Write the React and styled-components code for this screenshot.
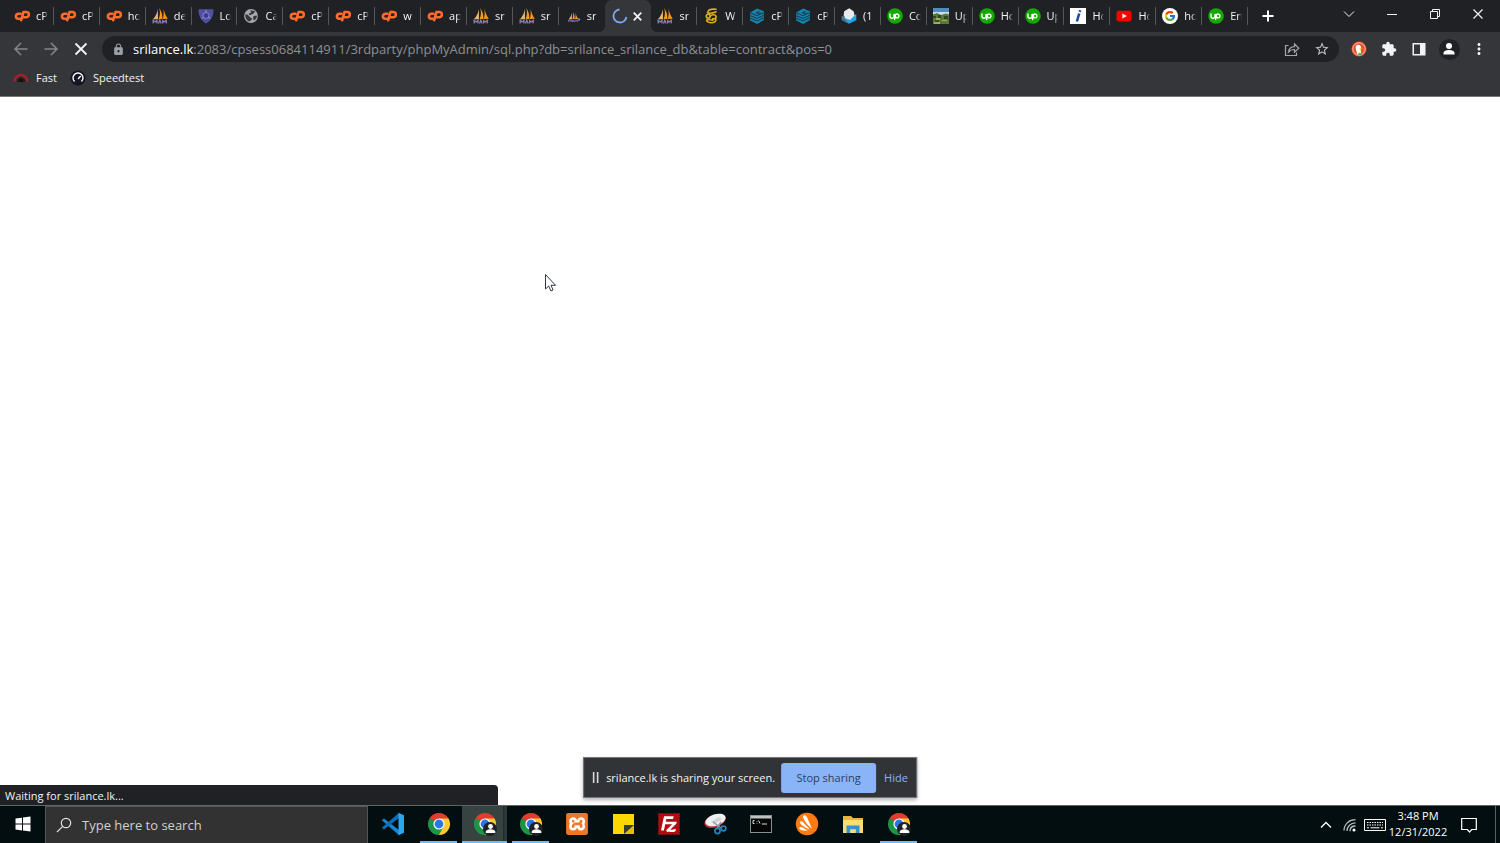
import React from "react";
import styled, { createGlobalStyle, css } from "styled-components";
import { MdExtension, MdLock, MdMoreVert, MdStarBorder } from "react-icons/md";
import { FcGoogle } from "react-icons/fc";
import { SiXampp, SiFilezilla } from "react-icons/si";

const Global = createGlobalStyle`
  *, *::before, *::after { box-sizing: border-box; }
  body {
    margin: 0;
    background: #fff;
    font-family: "Open Sans", "Noto Sans", sans-serif;
    font-size: 11px;
    line-height: 16px;
  }
  button, input { font: inherit; color: inherit; background: none; border: 0; padding: 0; margin: 0; outline: none; }
  svg { display: block; flex: none; }
`;

const Screen = styled.div`
  display: flex;
  flex-direction: column;
  min-height: 100vh;
  overflow: hidden;
`;

/* ---------- browser chrome ---------- */

const TitleBar = styled.header`
  display: flex;
  height: 32px;
  padding-left: 8px;
  background: #202124;
  color: #f1f3f4;
`;

const TabStrip = styled.nav`
  display: flex;
  flex: 1 1 0;
  min-width: 0;
  max-width: 1240px;
`;

const Tab = styled.button`
  position: relative;
  display: flex;
  flex: 1 1 0;
  min-width: 0;
  align-items: center;
  gap: 6px;
  padding: 0 6px;
  height: 32px;

  ${({ $divided }) => $divided && css`
    &::after {
      content: "";
      position: absolute;
      right: 0;
      top: 7px;
      width: 1px;
      height: 18px;
      background: #55575b;
    }
  `}

  ${({ $active }) => $active && css`
    gap: 4px;
    padding-left: 7px;
    background: #35363a;
    border-radius: 7px 7px 0 0;
    &::before, &::after {
      content: "";
      position: absolute;
      bottom: 0;
      width: 6px;
      height: 6px;
    }
    &::before { left: -6px; background: radial-gradient(circle at 0 0, #202124 6px, #35363a 6px); }
    &::after { right: -6px; background: radial-gradient(circle at 100% 0, #202124 6px, #35363a 6px); }
  `}
`;

const TabTitle = styled.span`
  flex: 1;
  min-width: 0;
  overflow: hidden;
  white-space: nowrap;
  text-align: left;
  mask-image: linear-gradient(to right, #000 65%, transparent 100%);
`;

const NewTab = styled.button`
  display: grid;
  place-items: center;
  width: 40px;
  height: 32px;
`;

const WindowControls = styled.div`
  display: flex;
  margin-left: auto;
  padding-right: 1px;
`;

const WindowButton = styled.button`
  display: grid;
  place-items: center;
  width: 43px;
  height: 27px;
`;

const Toolbar = styled.div`
  display: flex;
  align-items: center;
  height: 34px;
  padding: 0 6px;
  background: #35363a;
  color: #f1f3f4;
`;

const ToolButton = styled.button`
  display: grid;
  place-items: center;
  width: 30px;
  height: 28px;
  color: ${({ $dim }) => ($dim ? "#85878a" : "#f1f3f4")};
`;

const AddressBar = styled.form`
  display: flex;
  flex: 1;
  align-items: center;
  height: 26px;
  margin: 0 5px 0 6px;
  padding: 0 2px 0 10px;
  border-radius: 13px;
  background: #202124;
  color: #9aa0a6;
  font-size: 13px;
`;

const Host = styled.label`
  margin-left: 8px;
  color: #fff;
`;

const Path = styled.input`
  flex: 1;
  min-width: 0;
  height: 20px;
  color: #8d9094;
`;

const Avatar = styled.span`
  display: grid;
  place-items: center;
  width: 21px;
  height: 21px;
  border-radius: 50%;
  background: #202124;
`;

const Bookmarks = styled.nav`
  display: flex;
  gap: 13px;
  height: 31px;
  padding: 4px 13px 0;
  border-bottom: 1px solid #77797c;
  background: #35363a;
`;

const Bookmark = styled.a`
  display: flex;
  align-items: center;
  gap: 7px;
  height: 16px;
  color: #f1f3f4;
  text-decoration: none;
`;

/* ---------- page and overlays ---------- */

const Page = styled.main`
  position: relative;
  flex: 1;
  background: #fff;
`;

const Pointer = styled.span`
  position: absolute;
  left: 544px;
  top: 176px;
`;

const StatusBubble = styled.div`
  position: absolute;
  left: 0;
  bottom: 0;
  width: 498px;
  height: 20px;
  padding: 3px 5px 0;
  border-radius: 0 4px 0 0;
  background: #202124;
  color: #f1f3f4;
`;

const ShareBar = styled.div`
  position: absolute;
  left: 50%;
  bottom: 7px;
  transform: translateX(-50%);
  display: flex;
  align-items: center;
  height: 41px;
  padding: 0 8px;
  border: 1px solid #77797c;
  background: #323336;
  color: #f1f3f4;
  white-space: nowrap;
  box-shadow: 0 2px 4px rgba(0, 0, 0, 0.3);
`;

const ShareText = styled.span`
  margin: 0 6px 0 7px;
`;

const StopButton = styled.button`
  width: 95px;
  height: 30px;
  border-radius: 3px;
  background: #8ab4f8;
  color: #2c3d5c;
`;

const HideButton = styled.button`
  margin-left: 8px;
  color: #8ab4f8;
`;

/* ---------- taskbar ---------- */

const Taskbar = styled.footer`
  display: flex;
  height: 38px;
  border-top: 1px solid #5d6765;
  background: #020e10;
  color: #fff;
`;

const StartButton = styled.button`
  display: grid;
  place-items: center;
  width: 45px;
  padding-bottom: 1px;
`;

const SearchBox = styled.label`
  display: flex;
  align-items: center;
  gap: 10px;
  width: 323px;
  padding-left: 10px;
  border: 1px solid #565656;
  border-bottom: 0;
  background: #323232;
  color: #e0e0e0;
`;

const SearchInput = styled.input`
  flex: 1;
  min-width: 0;
  font-size: 13px;
  &::placeholder { color: #d0d0d0; opacity: 1; }
`;

const Apps = styled.nav`
  display: flex;
  gap: 1px;
  padding-left: 2px;
`;

const AppButton = styled.button`
  position: relative;
  display: grid;
  place-items: center;
  width: 45px;
  padding-bottom: 1px;
  background: ${({ $active }) => ($active ? "linear-gradient(to right, #364341 41px, #1c2b2a 41px, #2a3837 43px)" : "none")};

  ${({ $running, $active }) => $running && css`
    &::after {
      content: "";
      position: absolute;
      bottom: 0;
      left: ${$active ? 0 : 4}px;
      right: ${$active ? 0 : 4}px;
      height: 2px;
      background: #76b9ed;
    }
  `}
`;

const Tray = styled.div`
  display: flex;
  align-items: center;
  margin-left: auto;
`;

const TrayButton = styled.button`
  display: grid;
  place-items: center;
  width: 24px;
  height: 36px;
`;

const KeyboardButton = styled(TrayButton)`
  width: 26px;
`;

const Clock = styled.time`
  width: 60px;
  padding-bottom: 2px;
  text-align: center;
`;

const NoticeButton = styled(TrayButton)`
  width: 42px;
  margin-right: 5px;
`;

const ShowDesktop = styled.button`
  width: 5px;
  height: 37px;
  border-left: 1px solid #59625f;
`;

/* ---------- favicons ---------- */

const Icon = ({ size = 16, box = 16, children }) => (
  <svg width={size} height={size} viewBox={`0 0 ${box} ${box}`} fill="none" aria-hidden="true">{children}</svg>
);

const CPanelIcon = () => (
  <Icon>
    <g stroke="#ff6c2c" strokeWidth="2.600" strokeLinecap="round" strokeLinejoin="round">
      <path d="M6.500 5.800H4.400a2.500 2.500 0 0 0 0 5h1.300" />
      <path d="M7.200 12.200 9 5.700M9.500 4h2.600a2.600 2.600 0 0 1 .2 5.300H10" />
    </g>
  </Icon>
);

const Sails = ({ scale = 1 }) => (
  <Icon>
    <g transform={scale === 1 ? undefined : "translate(3 4) scale(.65)"}>
      <path d="M5.900.8C5.500 4.500 3.800 8.300.8 11.600l5.200-.6z" fill="#e8b56a" />
      <path d="M7.200 0c1.200 3.800 1 7.500-.7 11.300l3.900-.4C10.600 6.800 9.400 3 7.200 0z" fill="#f89c0e" />
      <path d="M11.600.8c.2 3.500.2 6.800-.8 10.200l5-.2c-2-2.700-3.500-6-4.200-10z" fill="#f7941e" />
      <path d="M1.200 15.500v-3l2 1.500L5 12.300v3.200m1.500 0 1.300-3.200 1.400 3.200m1.500 0v-2.800l1.500 1.300 2-1.600v3" stroke="#8784b4" strokeWidth="1.300" />
    </g>
    {scale !== 1 && <circle cx="14" cy="11.500" r="1.200" fill="#6f87cc" />}
  </Icon>
);

const ShieldIcon = () => (
  <Icon>
    <path d="M.5 1.300h15c.2 6.500-2.300 11.200-7.500 14.200C2.800 12.500.3 7.700.5 1.300z" fill="#5350a4" />
    <path d="M8 2v4M3.500 10.500 6.800 8m5.700 2.500L9.200 8" stroke="#9a96d8" strokeWidth="1" />
    <circle cx="8" cy="7.500" r="3" fill="#3e3b8d" stroke="#8985cf" />
  </Icon>
);

const GlobeIcon = () => (
  <Icon>
    <circle cx="8" cy="8" r="6.900" fill="#a6abaf" />
    <path d="M2.500 6.300c2 .2 3.200 1 4 2.500s2.500.5 2.400 2.100-1.900 1.400-2.400 2.700c-2.800-.7-4.800-4-4-7.300zM7.500 2.300l4.700 1-1.600 2.200c-1 .8-2.400.4-2.800 1.600-.7.5-2-.6-2-1.600l2.200-.7zM10.500 8l3.400-.5c0 2.500-1.200 4-3 5l-.8-2z" fill="#35383b" />
  </Icon>
);

const LetterformIcon = () => (
  <Icon>
    <g stroke="#dcae1e" strokeWidth="1.600" strokeLinecap="round">
      <path d="M5 3.500c.8-2 4.500-2.600 8-2.200M4.500 4.700c2.500 1 6 .3 8.500-.9" />
      <circle cx="5.200" cy="8.200" r="1.900" />
      <path d="M7.400 8.300c.7-2 5.200-2.200 5.700.2.300 2-1.400 2.700-3.600 2.300M12.500 10.500c1.200 3.700-2.200 4.700-5.600 4-3.400-.5-4.600-2.600-1.500-3.100 2-.2 2.600 1.200 4.300.8" />
    </g>
  </Icon>
);

const LayersIcon = () => (
  <Icon>
    <path d="m1.200 4.500 7-4 6.600 2.700v8.900L8.200 15.900l-7-3.400z" fill="#1685b0" />
    <path d="m1.500 5 6.700 2.700L11 6.200 7.500 4.700l3-1.500M1.500 7.700l6.700 2.800 6.300-3.200M1.500 10.200l6.700 2.800 6.300-3.300M10.500 5.200l4 .1" stroke="#174052" strokeWidth="1.100" />
  </Icon>
);

const MailBallIcon = () => (
  <Icon>
    <path d="M.8 8 8 10.200 15.300 6v6.200L8 15.800.8 12z" fill="#21a4e8" />
    <path d="m.8 7.500 7.200 8.300L.8 12z" fill="#5f6c75" />
    <path d="M3.200 3.200 8.300.3l4.500 3.100.7 4.200-4.400 4.400-4.500-1.500-2-3.200z" fill="#e8eaec" />
  </Icon>
);

const UpIcon = () => (
  <Icon>
    <circle cx="8" cy="8" r="7.800" fill="#14a800" />
    <path d="M3 6v2.200a2 2 0 0 0 4 0V6c.3 1.400 1.300 3.600 3 3.900a1.900 1.900 0 1 0-1.700-2.600L7.600 11.500" stroke="#fff" strokeWidth="1.400" strokeLinecap="round" />
  </Icon>
);

const PhotoIcon = () => (
  <Icon>
    <path fill="#4e8dbf" d="M0 0h16v5H0z" />
    <path fill="#c9dfe9" d="M0 4h16v3H0z" />
    <path fill="#5c7836" d="M0 6.500 4 5l4 2 5-1.500 3 1V16H0z" />
    <path fill="#2f4a23" d="M0 8h3v2H0zm5-1h3v3H5zm6 1h4v3h-4zM2 12h4v2H2z" />
    <path fill="#a4ad68" d="M3 10h4v2H3zm6 2h5v1H9zm-8 2h6v2H1z" />
  </Icon>
);

const InfoIcon = () => (
  <Icon>
    <path fill="#fff" d="M0 0h16v16H0z" />
    <path d="m9.200 5.500-2.300 8M10.100 2.300l-.4 1.600" stroke="#164a9c" strokeWidth="2.500" />
  </Icon>
);

const VideoIcon = () => (
  <Icon>
    <rect x=".5" y="2.800" width="15" height="10.600" rx="2.600" fill="#f00" />
    <path d="m6.400 5.600 4.400 2.500-4.400 2.500z" fill="#fff" />
  </Icon>
);

const GoogleIcon = () => (
  <Icon>
    <circle cx="8" cy="8" r="8" fill="#fff" />
    <FcGoogle x="2" y="2" size={12} />
  </Icon>
);

const Spinner = () => (
  <Icon>
    <path d="M7.500 1.500A6.500 6.500 0 1 0 14.400 9" stroke="#7da7ee" strokeWidth="1.800" />
  </Icon>
);

const FAVICONS = {
  cp: CPanelIcon, sail: Sails, shield: ShieldIcon, globe: GlobeIcon, si: LetterformIcon, layers: LayersIcon,
  ball: MailBallIcon, up: UpIcon, photo: PhotoIcon, info: InfoIcon, video: VideoIcon, google: GoogleIcon,
  smallSail: () => <Sails scale={0.65} />,
};

const TABS = [
  ["cp", "cP"], ["cp", "cP"], ["cp", "ho"], ["sail", "de"], ["shield", "Lo"], ["globe", "Ca"],
  ["cp", "cP"], ["cp", "cP"], ["cp", "w"], ["cp", "ap"], ["sail", "sr"], ["sail", "sr"], ["smallSail", "sr"],
  ["active", ""], ["sail", "sr"], ["si", "W"], ["layers", "cP"], ["layers", "cP"], ["ball", "(1"], ["up", "Co"],
  ["photo", "Up"], ["up", "Ho"], ["up", "Up"], ["info", "Ho"], ["video", "Ho"], ["google", "ho"], ["up", "En"],
];

/* ---------- taskbar icons ---------- */

const ChromeIcon = ({ profile }) => (
  <Icon size={24} box={24}>
    <path d="M12 12 2.470 6.500A11 11 0 0 1 21.530 6.500z" fill="#e33b2e" />
    <path d="M12 12 21.530 6.500A11 11 0 0 1 12 23z" fill="#fcc934" />
    <path d="M12 12v11A11 11 0 0 1 2.470 6.500z" fill="#1e9447" />
    <path d="M12 6.500h9.530L16.800 14.700z" fill="#fcc934" />
    <path d="M7.200 14.700 2.470 6.500 12 12zM16.800 14.700 12 23l-1-9z" fill="#1e9447" />
    <path d="M16.800 14.700 12 23l9-11-4-4z" fill="#fcc934" />
    <circle cx="12" cy="12" r="5.600" fill="#fff" />
    <circle cx="12" cy="12" r="4.400" fill="#2877e8" />
    {profile && (
      <>
        <circle cx="17" cy="17" r="7" fill="#202124" />
        <circle cx="17.500" cy="14.500" r="2.400" fill="#fff" />
        <path d="M12.700 21v-1c0-1.900 3-2.700 4.800-2.700s4.800.8 4.800 2.700v1z" fill="#fff" />
      </>
    )}
  </Icon>
);

const CodeIcon = () => (
  <Icon size={24} box={24}>
    <path d="M.8 8.200 3 6.500 18 18v5.200z" fill="#1684cf" />
    <path d="M.8 15.800 3 17.500 18 6V.8z" fill="#0b6db5" />
    <path d="m17.500.8 5.500 2.500v17.400l-5.500 2.500z" fill="#29a8f0" />
  </Icon>
);

const XamppIcon = () => (
  <Icon size={24} box={24}>
    <rect x="2" y="2" width="20" height="20" rx="2" fill="#fff" />
    <SiXampp x="1" y="1" size={22} color="#ee7728" />
  </Icon>
);

const NoteIcon = () => (
  <Icon size={24} box={24}>
    <path d="M2 2h21v11l-9 9H2z" fill="#fcd800" />
    <path d="M13 13h10v9H13z" fill="#3b3b36" />
    <path d="m13 22 10-9v9z" fill="#e8bd00" />
  </Icon>
);

const FileZillaIcon = () => (
  <Icon size={24} box={24}>
    <rect x="2" y="2" width="20" height="20" fill="#fff" />
    <SiFilezilla x="1" y="1" size={22} color="#b30b10" />
  </Icon>
);

const SnipIcon = () => (
  <Icon size={24} box={24}>
    <ellipse cx="12" cy="9" rx="11" ry="6.300" transform="rotate(-18 12 9)" fill="#b6333c" />
    <ellipse cx="12.500" cy="8" rx="10.500" ry="5.700" transform="rotate(-18 12.500 8)" fill="#eef0f1" />
    <path d="m8 10 8-5 3 2-7 5z" fill="#cfd4d8" />
    <path d="m10 10 8 6m0-6-4 6" stroke="#8d9ba6" strokeWidth="1.500" />
    <circle cx="14.500" cy="19" r="2.600" stroke="#2584bd" strokeWidth="1.700" />
    <circle cx="20.500" cy="16.500" r="2.300" stroke="#2584bd" strokeWidth="1.700" />
  </Icon>
);

const TerminalIcon = () => (
  <Icon size={24} box={24}>
    <rect x="1.500" y="3.500" width="21" height="17" fill="#050505" stroke="#8b8f90" />
    <path d="M2 4h20v2.500H2z" fill="#c0c3c4" />
    <path d="M5.500 8.500H4v3h1.500M8 9v.7m0 1.300v.6M9.500 8.500l1.500 3M13 12h5" stroke="#ddd" strokeWidth="1" />
  </Icon>
);

const AvastIcon = () => (
  <Icon size={24} box={24}>
    <circle cx="12" cy="12" r="11.200" fill="#ff7a0f" />
    <path d="M8.500 3.800c1.800-1.200 3 .3 3.500 1.500l5 11.500c-4-3-7-7-8.900-11.300-.3-.7-.2-1.300.4-1.700zM5.500 9.500c1.600-.8 2.300.3 3.300 1.500l6.200 6.500c-4-1.300-7.700-3.400-9.900-6.300-.4-.7-.3-1.400.4-1.700zM5.200 15c1.500-.1 4 1.700 7.800 3.300-2.500.9-6.500.6-8.400-1.200-.9-1-.4-2 .6-2.100z" fill="#fff" />
  </Icon>
);

const FolderIcon = () => (
  <Icon size={24} box={24}>
    <path d="M2 4h8l2 2h10v15H2z" fill="#e8b53a" />
    <path d="M2 8h20v13H2z" fill="#ffdc72" />
    <path d="M5.500 21v-7.500h13V21h-3.700v-3.700H9.200V21z" fill="#3991d2" />
  </Icon>
);

const APPS = [
  { name: "Code editor", icon: <CodeIcon /> },
  { name: "Chrome", icon: <ChromeIcon />, running: true },
  { name: "Chrome, current window", icon: <ChromeIcon profile />, running: true, active: true },
  { name: "Chrome, second profile", icon: <ChromeIcon profile />, running: true },
  { name: "XAMPP", icon: <XamppIcon /> },
  { name: "Sticky Notes", icon: <NoteIcon /> },
  { name: "FileZilla", icon: <FileZillaIcon /> },
  { name: "Snipping Tool", icon: <SnipIcon /> },
  { name: "Command Prompt", icon: <TerminalIcon /> },
  { name: "Avast", icon: <AvastIcon /> },
  { name: "File Explorer", icon: <FolderIcon /> },
  { name: "Chrome, third profile", icon: <ChromeIcon profile />, running: true },
];

const Line = ({ d, size = 16, width = 1, color = "currentColor" }) => (
  <Icon size={size}><path d={d} stroke={color} strokeWidth={width} /></Icon>
);

function BrowserTabs() {
  return (
    <TabStrip aria-label="Tabs">
      {TABS.map(([kind, title], i) => {
        if (kind === "active") {
          return (
            <Tab key={i} $active aria-label="Current tab">
              <Spinner />
              <Line size={11} d="M2.500 2.500l11 11M13.500 2.500l-11 11" width={2.600} />
            </Tab>
          );
        }
        const Favicon = FAVICONS[kind];
        const beforeActive = TABS[i + 1]?.[0] === "active";
        return (
          <Tab key={i} $divided={!beforeActive}>
            <Favicon />
            <TabTitle>{title}</TabTitle>
          </Tab>
        );
      })}
    </TabStrip>
  );
}

export default function App() {
  return (
    <Screen>
      <Global />
      <TitleBar>
        <BrowserTabs />
        <NewTab aria-label="New tab"><Line d="M8 2.500v11M2.500 8h11" width={2} color="#fff" /></NewTab>
        <WindowControls>
          <WindowButton aria-label="Search tabs"><Line d="m3 5.500 5 5 5-5" /></WindowButton>
          <WindowButton aria-label="Minimize"><Line d="M3 8.500h10" /></WindowButton>
          <WindowButton aria-label="Restore"><Line d="M3.500 5.500h7v7h-7zM5.500 5V3.500h7v7H11" /></WindowButton>
          <WindowButton aria-label="Close"><Line d="m3.500 3.500 9 9m0-9-9 9" width={1.200} /></WindowButton>
        </WindowControls>
      </TitleBar>

      <Toolbar>
        <ToolButton $dim aria-label="Back"><Line d="M14.500 8H2m6-6L2 8l6 6" width={1.500} /></ToolButton>
        <ToolButton $dim aria-label="Forward"><Line d="M1.500 8H14M8 2l6 6-6 6" width={1.500} /></ToolButton>
        <ToolButton aria-label="Stop"><Line d="m2.500 2.500 11 11m0-11-11 11" width={1.800} /></ToolButton>
        <AddressBar onSubmit={(e) => e.preventDefault()}>
          <MdLock size={13} />
          <Host htmlFor="address">srilance.lk</Host>
          <Path id="address" readOnly value=":2083/cpsess0684114911/3rdparty/phpMyAdmin/sql.php?db=srilance_srilance_db&table=contract&pos=0" />
          <ToolButton $dim type="button" aria-label="Share">
            <Line d="M4.500 4.500h-3v10h11v-3M4.500 11c.5-3.600 2.500-5.200 6-5.300V3l4.300 4.200-4.300 4V8.500C8 8.400 6 9.300 4.500 11z" width={1.200} color="#a5a8ab" />
          </ToolButton>
          <ToolButton type="button" aria-label="Bookmark"><MdStarBorder size={16} color="#bdc1c6" /></ToolButton>
        </AddressBar>
        <ToolButton aria-label="Privacy extension">
          <Icon>
            <circle cx="8" cy="8" r="7.500" fill="#e3562f" />
            <circle cx="8" cy="8" r="6.200" stroke="#f6cdbd" strokeWidth=".8" />
            <path d="M6 13.500c0-3-2-6.500-1-8.500 1-1.700 4.500-1.700 5 1 .3 2-.8 3 .2 6z" fill="#fff" />
            <path d="M8.500 7.300h3.200l-2.800 1.400z" fill="#fdbb14" />
            <path d="m7.500 11.500 3.500 1v1.400H7.500z" fill="#54b948" />
          </Icon>
        </ToolButton>
        <ToolButton aria-label="Extensions"><MdExtension size={16} /></ToolButton>
        <ToolButton aria-label="Side panel">
          <Icon><path fillRule="evenodd" d="M1.500 2h13v12.500h-13zM3 3.500V13h6V3.500z" fill="#f1f3f4" /></Icon>
        </ToolButton>
        <ToolButton aria-label="Profile">
          <Avatar>
            <Icon>
              <circle cx="8" cy="5" r="3" fill="#fff" />
              <path d="M2.500 13.500v-1.300C2.500 9.700 6 9 8 9s5.500.7 5.500 3.200v1.300z" fill="#fff" />
            </Icon>
          </Avatar>
        </ToolButton>
        <ToolButton aria-label="Menu"><MdMoreVert size={18} /></ToolButton>
      </Toolbar>

      <Bookmarks aria-label="Bookmarks">
        <Bookmark href="#fast">
          <Icon>
            <path d="M1.500 11.500a6.500 6.500 0 0 1 13 0" stroke="#c21820" strokeWidth="2" />
            <path d="M4 12a4 4 0 0 1 8 0z" fill="#241416" />
            <path d="m7 12 .8-6 1.200 6z" fill="#0c0c0c" />
          </Icon>
          Fast
        </Bookmark>
        <Bookmark href="#speedtest">
          <Icon>
            <circle cx="8" cy="8" r="7.600" fill="#141526" />
            <path d="M4.600 11.600a5 5 0 1 1 6.800 0M8 9l2.700-3" stroke="#fff" strokeWidth="1.400" />
          </Icon>
          Speedtest
        </Bookmark>
      </Bookmarks>

      <Page>
        <Pointer>
          <svg width="13" height="20" viewBox="0 0 13 20" aria-hidden="true">
            <path d="M1.500 1.500v14.500l3.200-3 2.200 5 2.200-1-2.100-4.700h4.500z" fill="#fff" stroke="#333842" />
          </svg>
        </Pointer>
        <StatusBubble role="status">Waiting for srilance.lk...</StatusBubble>
        <ShareBar>
          <svg width="7" height="11" viewBox="0 0 7 11" aria-hidden="true"><path d="M1.500 0v11M5.500 0v11" stroke="#d8dadd" strokeWidth="1.600" /></svg>
          <ShareText>srilance.lk is sharing your screen.</ShareText>
          <StopButton>Stop sharing</StopButton>
          <HideButton>Hide</HideButton>
        </ShareBar>
      </Page>

      <Taskbar>
        <StartButton aria-label="Start">
          <Icon><path d="M.5 2.500 7 1.700v5.900H.5zM8 1.500 15.500.5v7.100H8zM.5 8.500H7v5.900l-6.500-.8zM8 8.500h7.500v7.100L8 14.600z" fill="#fff" /></Icon>
        </StartButton>
        <SearchBox>
          <Icon>
            <circle cx="10" cy="6" r="4.700" stroke="#e0e0e0" strokeWidth="1.200" />
            <path d="M6.700 9.300 1 15" stroke="#e0e0e0" strokeWidth="1.200" />
          </Icon>
          <SearchInput type="text" aria-label="Search" placeholder="Type here to search" />
        </SearchBox>
        <Apps aria-label="Apps">
          {APPS.map((app) => (
            <AppButton key={app.name} aria-label={app.name} $running={app.running} $active={app.active}>
              {app.icon}
            </AppButton>
          ))}
        </Apps>
        <Tray>
          <TrayButton aria-label="Hidden icons"><Line d="m3 10.500 5-5 5 5" width={1.300} /></TrayButton>
          <TrayButton aria-label="Network">
            <Icon>
              <g stroke="#b8bebe" strokeWidth="1.300">
                <path d="M2 13.500C2 7.500 7 2.700 13.500 2.700M5 14c0-4.600 3.600-8.200 8.500-8.200M8 14.200C8 11 10.300 9 13.500 9" />
              </g>
              <circle cx="12" cy="13" r="1.500" fill="#fff" />
            </Icon>
          </TrayButton>
          <KeyboardButton aria-label="Keyboard">
            <svg width="22" height="14" viewBox="0 0 22 14" fill="none" aria-hidden="true">
              <path d="M.5 1.500h21v11H.500z" stroke="#fff" />
              <path d="M3 4.500h16M3 7h16" stroke="#fff" strokeWidth="1.200" strokeDasharray="1.500 1" />
              <path d="M3 9.800h2m1.500 0h9m1.500 0h2" stroke="#fff" />
            </svg>
          </KeyboardButton>
          <Clock dateTime="2022-12-31T15:48">3:48 PM<br />12/31/2022</Clock>
          <NoticeButton aria-label="Notifications"><Line d="M.7 1.500h14.600v11h-4.600L8.500 15l-2.200-2.500H.7z" width={1.200} /></NoticeButton>
          <ShowDesktop aria-label="Show desktop" />
        </Tray>
      </Taskbar>
    </Screen>
  );
}
